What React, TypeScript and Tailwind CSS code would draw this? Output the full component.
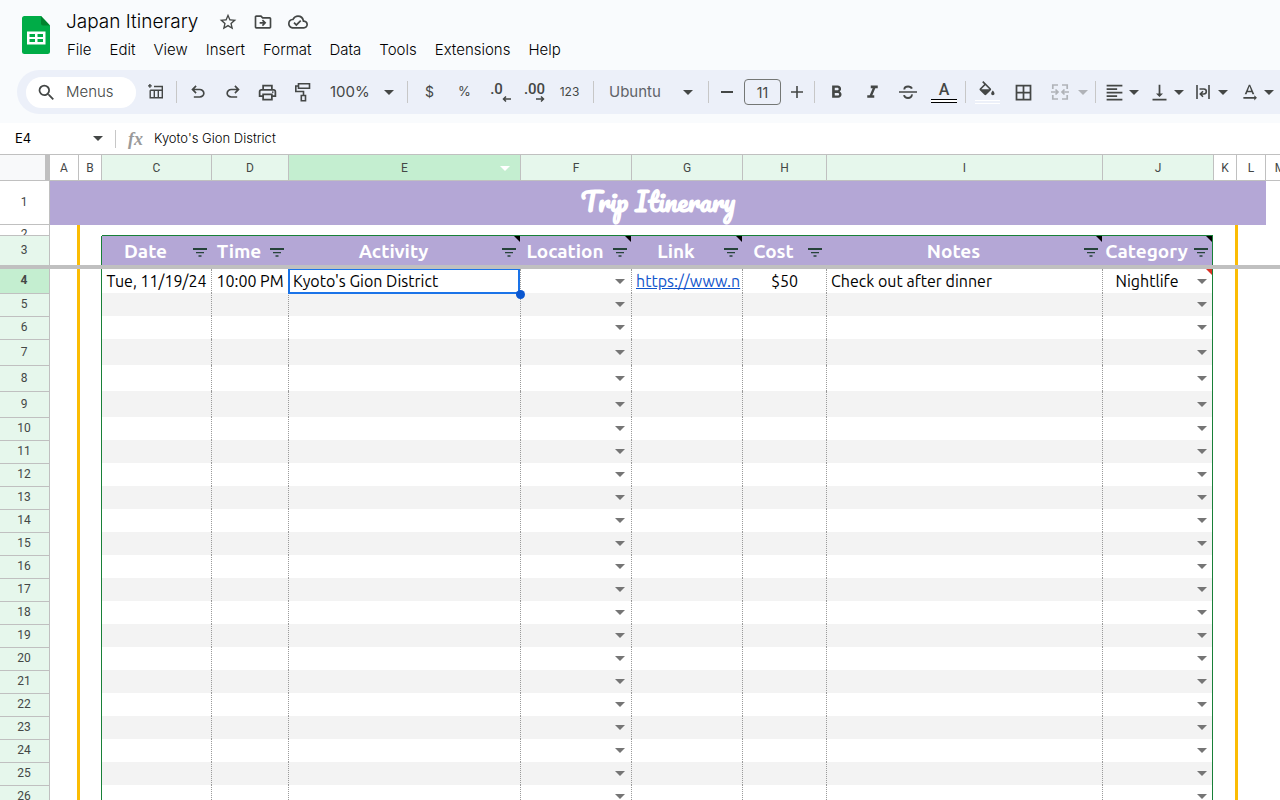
import React from 'react'
import clsx from 'clsx'
import {
  MdBorderAll,
  MdFormatAlignLeft,
  MdFormatBold,
  MdFormatItalic,
  MdOutlineCloudDone,
  MdOutlineDriveFileMove,
  MdOutlinePrint,
  MdSearch,
  MdStarBorder,
  MdTextRotationNone,
  MdVerticalAlignBottom
} from 'react-icons/md'

const MENUS = ['File', 'Edit', 'View', 'Insert', 'Format', 'Data', 'Tools', 'Extensions', 'Help']

interface Column {
  id: string
  col: string
  title?: string
  value?: string
  note?: boolean
  dropdown?: boolean
}

const TABLE_COLUMNS: Column[] = [
  { id: 'C', col: 'w-[110px]', title: 'Date', value: 'Tue, 11/19/24' },
  { id: 'D', col: 'w-[77px]', title: 'Time', value: '10:00 PM' },
  { id: 'E', col: 'w-[232px]', title: 'Activity', value: "Kyoto's Gion District", note: true },
  { id: 'F', col: 'w-[111px]', title: 'Location', note: true, dropdown: true },
  { id: 'G', col: 'w-[111px]', title: 'Link', value: 'https://www.n', note: true },
  { id: 'H', col: 'w-[84px]', title: 'Cost', value: '$50' },
  { id: 'I', col: 'w-[276px]', title: 'Notes', value: 'Check out after dinner', note: true },
  { id: 'J', col: 'w-[110px]', title: 'Category', value: 'Nightlife', note: true, dropdown: true }
]

const ROWS = Array.from({ length: 23 }, (_, i) => i + 4)

const Caret = ({ className = 'text-[#444746]' }: { className?: string }) => (
  <svg viewBox="0 0 10 5" className={clsx('h-[5px] w-2.5 shrink-0', className)} fill="currentColor" aria-hidden="true">
    <path d="M0 0h10L5 5z" />
  </svg>
)

const SheetsLogo = () => (
  <svg viewBox="0 0 28 38" className="h-[38px] w-7" aria-hidden="true">
    <path d="M2.500 0H19l9 9.500v26a2.500 2.500 0 0 1-2.500 2.500h-23A2.500 2.500 0 0 1 0 35.500v-33A2.500 2.500 0 0 1 2.500 0z" fill="#00ac47" />
    <path d="M19 0l9 9.500h-7A2 2 0 0 1 19 7.500z" fill="#00832d" />
    <path fillRule="evenodd" fill="#fff" d="M5 15.500h18.500v13H5zM7.500 18v3h5.500v-3zM15.500 18v3H21v-3zM7.500 23v3h5.500v-3zM15.500 23v3H21v-3z" />
  </svg>
)

const PivotIcon = () => (
  <svg viewBox="0 0 16 16" className="size-4" fill="none" stroke="currentColor" strokeWidth="1.400" aria-hidden="true">
    <path d="M6 2.500h8.300v11.300H2.200V6.200M2.200 6.200h12.100M6.300 6.200v7.600M10.300 6.200v7.600M1.900 0v3.800M0 1.900h3.800" />
  </svg>
)

const UndoIcon = ({ className }: { className?: string }) => (
  <svg viewBox="0 0 24 24" className={clsx('size-5', className)} fill="currentColor" aria-hidden="true">
    <path d="M7 19v-2h7.100q1.575 0 2.738-1T18 13.500 16.838 11 14.100 10H7.800l2.600 2.600L9 14 4 9l5-5 1.400 1.400L7.800 8h6.300q2.425 0 4.163 1.575T20 13.500t-1.737 3.925T14.100 19z" />
  </svg>
)

const PaintIcon = () => (
  <svg viewBox="0 0 18 20" className="h-5 w-[18px]" fill="none" stroke="currentColor" strokeWidth="1.600" aria-hidden="true">
    <path d="M4.500 1.800h11v4.400h-11zM4.500 4H1.800v5.500h7.700v4M7.300 13.500h4.200v5.200H7.300z" />
  </svg>
)

const StrikeIcon = () => (
  <svg viewBox="0 0 18 16" className="h-4 w-[18px]" fill="none" stroke="currentColor" aria-hidden="true">
    <path d="M0 8h18" strokeWidth="1.600" />
    <path d="M5.300 5.500C5.300 3.300 6.700 2.500 9.100 2.500c1.900 0 3.200.6 3.800 2.100M12.900 10.400c.1 2.300-1.500 3.600-3.900 3.600-2.200 0-3.600-1-4-2.900" strokeWidth="1.900" />
  </svg>
)

const FillIcon = () => (
  <svg viewBox="0 0 24 18" className="h-[15px] w-5" fill="currentColor" aria-hidden="true">
    <path d="M16.560 8.940L7.620 0 6.210 1.410l2.380 2.380-5.150 5.150c-.59.59-.59 1.540 0 2.120l5.500 5.500c.29.29.68.44 1.060.44s.77-.15 1.060-.44l5.500-5.500c.59-.58.59-1.530 0-2.120zM5.210 10L10 5.210 14.790 10H5.210zM19 11.500s-2 2.170-2 3.500c0 1.100.9 2 2 2s2-.9 2-2c0-1.330-2-3.500-2-3.500z" />
  </svg>
)

const MergeIcon = () => (
  <svg viewBox="0 0 18 16" className="h-4 w-[18px]" fill="none" stroke="currentColor" strokeWidth="1.700" aria-hidden="true">
    <path d="M7 1H1.800v4M11 1h5.200v4M7 15H1.800v-4M11 15h5.200v-4M0 8h6.500M18 8h-6.500M4.500 5.500L7 8l-2.500 2.500M13.500 5.500L11 8l2.500 2.500" />
  </svg>
)

const WrapIcon = () => (
  <svg viewBox="0 0 14 14" className="size-3.5" fill="none" stroke="currentColor" strokeWidth="1.600" aria-hidden="true">
    <path d="M1 0v14M13 0v14M3.500 4h4.300a2.500 2.500 0 0 1 0 5H4.500M7 6.300L4.300 9 7 11.700" />
  </svg>
)

const FilterIcon = () => (
  <svg viewBox="0 0 14 9" className="h-[9px] w-3.5" fill="#26433a" aria-hidden="true">
    <path d="M0 0h14v2H0zM3 4h8v1.300H3zM5.500 7.300h3v1.500h-3z" />
  </svg>
)

const Separator = ({ className }: { className?: string }) => (
  <div className={clsx('mx-[3px] h-[22px] w-px shrink-0 bg-[#c7c7c7]', className)} />
)

interface ToolProps {
  label: string
  className?: string
  children: React.ReactNode
}

const Tool = ({ label, className = 'w-[35px]', children }: ToolProps) => (
  <button
    type="button"
    aria-label={label}
    title={label}
    className={clsx('flex h-8 shrink-0 items-center justify-center', className)}
  >
    {children}
  </button>
)

const DecimalTool = ({ label, digits, back }: { label: string; digits: string; back?: boolean }) => (
  <Tool label={label}>
    <span className={clsx("relative pb-1.5 font-['Roboto',sans-serif] text-[15px] leading-4 font-medium", back ? 'pr-1' : 'pl-0.5')}>
      {digits}
      <svg
        viewBox="0 0 9 6"
        className={clsx('absolute bottom-px h-1.5 w-[9px]', back ? '-right-1' : 'right-0')}
        fill="none"
        stroke="currentColor"
        strokeWidth="1.500"
        aria-hidden="true"
      >
        <path d={back ? 'M9 3H1.500M4 .5L1.500 3 4 5.500' : 'M0 3h7.500M5 .5L7.500 3 5 5.500'} />
      </svg>
    </span>
  </Tool>
)

const Toolbar = () => (
  <div className="ml-[17px] flex h-11 items-center overflow-hidden rounded-l-full bg-[#ecf0f9] pl-[9px] text-[#444746]">
    <label className="flex h-[31px] w-[110px] shrink-0 items-center gap-[9px] rounded-full bg-white pl-2.5">
      <MdSearch className="size-[21px] shrink-0" />
      <input
        aria-label="Menus"
        placeholder="Menus"
        className="w-full min-w-0 bg-transparent text-[15px] font-light outline-none placeholder:text-[#444746]"
      />
    </label>
    <Tool label="Pivot table" className="ml-0.5 w-[35px]"><PivotIcon /></Tool>
    <Separator />
    <Tool label="Undo"><UndoIcon /></Tool>
    <Tool label="Redo"><UndoIcon className="-scale-x-100" /></Tool>
    <Tool label="Print"><MdOutlinePrint className="size-[21px]" /></Tool>
    <Tool label="Paint format"><PaintIcon /></Tool>
    <label className="relative flex h-8 w-[84px] shrink-0 items-center">
      <select aria-label="Zoom" className="h-full w-full appearance-none pl-2.5 text-[15px] outline-none">
        <option>100%</option>
      </select>
      <Caret className="pointer-events-none absolute right-2.5" />
    </label>
    <Separator />
    <Tool label="Format as currency"><span className="pl-0.5 text-sm">$</span></Tool>
    <Tool label="Format as percent"><span className="pl-0.5 text-[13px]">%</span></Tool>
    <DecimalTool label="Decrease decimal places" digits=".0" back />
    <DecimalTool label="Increase decimal places" digits=".00" />
    <Tool label="More formats"><span className="pl-0.5 text-xs">123</span></Tool>
    <Separator className="ml-[7px]" />
    <label className="relative flex h-8 w-[108px] shrink-0 items-center">
      <select aria-label="Font" className="h-full w-full appearance-none pl-3 text-[15px] text-[#5f6368] outline-none">
        <option>Ubuntu</option>
      </select>
      <Caret className="pointer-events-none absolute right-3" />
    </label>
    <Separator />
    <Tool label="Decrease font size" className="w-[30px]"><span className="h-0.5 w-3 bg-[#444746]" /></Tool>
    <input
      aria-label="Font size"
      defaultValue="11"
      className="mx-0.5 h-[26px] w-[37px] shrink-0 rounded border border-[#747775] text-center text-sm outline-none"
    />
    <Tool label="Increase font size" className="w-7">
      <svg viewBox="0 0 12 12" className="size-3" stroke="currentColor" strokeWidth="1.600" aria-hidden="true">
        <path d="M6 0v12M0 6h12" />
      </svg>
    </Tool>
    <Separator />
    <Tool label="Bold" className="w-9"><MdFormatBold className="size-[21px]" /></Tool>
    <Tool label="Italic" className="w-9"><MdFormatItalic className="size-[21px]" /></Tool>
    <Tool label="Strikethrough" className="w-9"><StrikeIcon /></Tool>
    <Tool label="Text color" className="w-9 flex-col">
      <span className="font-['Roboto',sans-serif] text-base leading-[18px] font-medium">A</span>
      <span className="h-1 w-[26px] border-y border-black bg-white" />
    </Tool>
    <Separator />
    <Tool label="Fill color" className="w-9 flex-col gap-1">
      <FillIcon />
      <span className="h-1 w-[25px] border-y border-white" />
    </Tool>
    <Tool label="Borders" className="w-9"><MdBorderAll className="size-[21px]" /></Tool>
    <Tool label="Merge cells" className="w-[51px] gap-[9px] pl-1.5 text-[#b0b3b8]"><MergeIcon /><Caret className="text-[#b0b3b8]" /></Tool>
    <Separator />
    <Tool label="Horizontal align" className="w-[45px] gap-1"><MdFormatAlignLeft className="size-[21px]" /><Caret /></Tool>
    <Tool label="Vertical align" className="w-[45px] gap-1"><MdVerticalAlignBottom className="size-[21px]" /><Caret /></Tool>
    <Tool label="Text wrapping" className="w-[45px] gap-2"><WrapIcon /><Caret /></Tool>
    <Tool label="Text rotation" className="w-[45px] gap-1"><MdTextRotationNone className="size-[21px]" /><Caret /></Tool>
  </div>
)

const HeadCell = ({ id, className }: { id: string; className?: string }) => (
  <th
    scope="col"
    className={clsx("relative h-[26px] border-b border-[#c0c0c0] p-0 font-['Roboto',sans-serif] text-xs font-normal", className)}
  >
    {id}
    {id === 'E' && <Caret className="absolute top-[11px] right-2.5 text-white" />}
  </th>
)

const RowHead = ({ n, className }: { n: number; className?: string }) => (
  <th
    scope="row"
    className={clsx(
      'border-r border-[#c0c0c0] p-0 text-center text-xs',
      n === 4 ? 'bg-[#c4eed0] font-bold' : 'font-normal',
      n > 4 && 'border-t',
      n < 3 && 'bg-white',
      (n === 3 || n > 4) && 'bg-[#e6f7ec]',
      className
    )}
  >
    <div className={clsx('pr-px', n === 2 ? 'h-2.5 overflow-hidden leading-[18px]' : 'pb-0.5')}>{n}</div>
  </th>
)

// Margin columns carry the yellow guide lines on either side of the table
const LeftMargin = ({ inTable = true }: { inTable?: boolean }) => (
  <>
    <td className="border-r-2 border-[#fbbc04] p-0" />
    <td className={clsx('border-l border-l-[#fbbc04] p-0', inTable && 'border-r border-r-[#188038]')} />
  </>
)

const RightMargin = () => (
  <>
    <td className="border-r-2 border-[#fbbc04] p-0" />
    <td className="border-l border-[#fbbc04] p-0" />
    <td className="p-0" />
  </>
)

const Corner = ({ className }: { className: string }) => (
  <svg viewBox="0 0 6 6" className={clsx('absolute top-0 right-0 size-1.5', className)} fill="currentColor" aria-hidden="true">
    <path d="M0 0h6v6z" />
  </svg>
)

const BodyCell = ({ column, row }: { column: Column; row: number }) => {
  const { id, value, dropdown } = column
  const text = row === 4 ? value : undefined
  return (
    <td
      className={clsx(
        'relative border-r p-0',
        id === 'J' ? 'border-[#188038]' : 'border-dotted border-[#9a9a9a]',
        row % 2 === 1 && 'bg-[#f3f3f3]'
      )}
    >
      <div className="flex items-center leading-[23px]">
        <span
          className={clsx(
            'min-w-0 flex-1 whitespace-nowrap',
            id === 'C' || id === 'D' || id === 'H' || id === 'J' ? 'text-center' : 'pl-1'
          )}
        >
          {id === 'G' && text ? (
            <a href="#link" className="text-[#1155cc] underline">{text}</a>
          ) : (
            text
          )}
        </span>
        {dropdown && (
          <button
            type="button"
            aria-label={`Choose ${column.title} for row ${row}`}
            className={clsx('pl-1.5', id === 'J' ? 'pr-[5px]' : 'pr-1.5')}
          >
            <Caret className="text-[#757575]" />
          </button>
        )}
      </div>
      {row === 4 && id === 'J' && <Corner className="text-[#d93025]" />}
      {row === 4 && id === 'E' && (
        <div className="pointer-events-none absolute top-0 right-0 -bottom-px -left-px z-10 border-2 border-t border-[#1a73e8]">
          <span className="absolute -right-[7px] -bottom-[7px] size-[9px] rounded-full bg-[#0b57d0]" />
        </div>
      )}
    </td>
  )
}

const Grid = () => (
  <table className="w-full min-w-[1294px] table-fixed border-separate border-spacing-0 bg-white text-[#444746]">
    <colgroup>
      <col className="w-[50px]" />
      <col className="w-[29px]" />
      <col className="w-[23px]" />
      {TABLE_COLUMNS.map((c) => (
        <col key={c.id} className={c.col} />
      ))}
      <col className="w-6" />
      <col className="w-[29px]" />
      <col />
    </colgroup>
    <thead>
      <tr>
        <td className="border-r-[5px] border-b border-[#c0c0c0] bg-[#f8f9fa] p-0" />
        <HeadCell id="A" className="border-r" />
        <HeadCell id="B" className="border-r" />
        {TABLE_COLUMNS.map(({ id }) => (
          <HeadCell
            key={id}
            id={id}
            className={clsx(id !== 'J' && 'border-r', id === 'E' ? 'bg-[#c4eed0]' : 'bg-[#e6f7ec]')}
          />
        ))}
        <HeadCell id="K" className="border-x" />
        <HeadCell id="L" className="border-r" />
        <HeadCell id="M" />
      </tr>
    </thead>
    <tbody className="font-['Ubuntu','Noto_Sans',sans-serif] text-base text-black [&_th]:font-['Roboto',sans-serif] [&_th]:text-[#444746]">
      <tr className="h-11">
        <RowHead n={1} className="border-b" />
        <td
          colSpan={12}
          className="bg-[#b4a7d6] p-0 pb-1 text-center font-['Pacifico','Liberation_Serif',cursive] text-[26px] leading-10 font-bold text-white"
        >
          Trip Itinerary
        </td>
        <td className="p-0" />
      </tr>
      <tr className="h-[11px]">
        <RowHead n={2} className="border-b" />
        <LeftMargin inTable={false} />
        <td colSpan={8} className="border-b border-[#188038] p-0" />
        <RightMargin />
      </tr>
      <tr className="h-[29px]">
        <RowHead n={3} />
        <LeftMargin />
        {TABLE_COLUMNS.map(({ id, title, note }) => (
          <td
            key={id}
            className={clsx(
              'relative border-r bg-[#b4a7d6] p-0',
              id === 'J' ? 'border-[#188038]' : 'border-transparent'
            )}
          >
            <div className="flex items-center">
              <span className="flex min-w-0 flex-1 justify-center text-[19px] leading-7 font-bold text-white">{title}</span>
              <button type="button" aria-label={`Filter ${title}`} className="px-1 pt-1">
                <FilterIcon />
              </button>
            </div>
            {note && <Corner className="text-black" />}
          </td>
        ))}
        <RightMargin />
      </tr>
      <tr className="h-1">
        <td colSpan={14} className="bg-[#c0c0c0] p-0" />
      </tr>
      {ROWS.map((n) => (
        <tr key={n} className={clsx(n === 4 ? 'h-6' : n > 6 && n < 10 ? 'h-[26px]' : 'h-[23px]')}>
          <RowHead n={n} />
          <LeftMargin />
          {TABLE_COLUMNS.map((column) => (
            <BodyCell key={column.id} column={column} row={n} />
          ))}
          <RightMargin />
        </tr>
      ))}
    </tbody>
  </table>
)

export default function App() {
  return (
    <div className="flex h-screen flex-col overflow-hidden bg-[#f9fbfd] font-['Inter','Roboto',sans-serif] text-[#1f1f1f]">
      <header className="flex h-[70px] shrink-0 gap-4 pt-2 pl-[22px]">
        <div className="pt-2">
          <SheetsLogo />
        </div>
        <div>
          <div className="flex items-center text-[#444746]">
            <h1 className="text-[19px] leading-7 font-light text-black">Japan Itinerary</h1>
            <button type="button" aria-label="Star" className="ml-5"><MdStarBorder className="size-5" /></button>
            <button type="button" aria-label="Move" className="ml-[15px]"><MdOutlineDriveFileMove className="size-5" /></button>
            <button type="button" aria-label="Document status" className="ml-[15px]"><MdOutlineCloudDone className="size-5" /></button>
          </div>
          <nav className="flex gap-[18px] pl-px text-[15px] leading-7 font-light text-black">
            {MENUS.map((menu) => (
              <button key={menu} type="button">{menu}</button>
            ))}
          </nav>
        </div>
      </header>
      <Toolbar />
      <div className="mt-[9px] flex h-8 shrink-0 items-center border-b border-[#c0c0c0] bg-white">
        <input aria-label="Name box" defaultValue="E4" className="w-[78px] pl-[15px] text-[13px] text-black outline-none" />
        <button type="button" aria-label="Named ranges" className="ml-3.5 p-px"><Caret /></button>
        <div className="mr-3 ml-[11px] h-[18px] w-px bg-[#c7c7c7]" />
        <label htmlFor="formula" className="w-[26px] font-['Liberation_Serif',serif] text-lg font-bold text-[#9a9a9a] italic">fx</label>
        <input
          id="formula"
          defaultValue="Kyoto's Gion District"
          className="min-w-0 flex-1 text-[13px] font-light text-black outline-none"
        />
      </div>
      <main className="min-h-0 flex-1 overflow-hidden bg-white">
        <Grid />
      </main>
    </div>
  )
}
